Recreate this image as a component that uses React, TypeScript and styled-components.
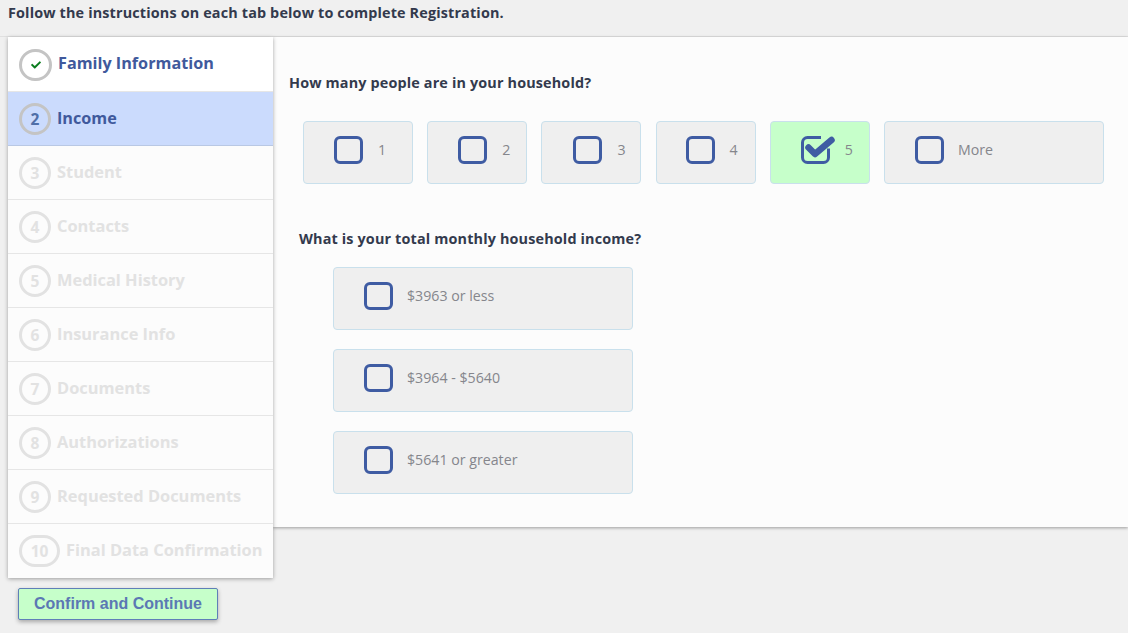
import styled, { createGlobalStyle } from 'styled-components';
import { FaCheck } from 'react-icons/fa';

type StepState = 'done' | 'active' | 'locked';

const GlobalStyle = createGlobalStyle`
  html, body {
    margin: 0;
    padding: 0;
    height: 633px;
    overflow: hidden;
    background: #f0f0f0;
    font-family: 'Open Sans', 'Liberation Sans', sans-serif;
  }
`;

const Page = styled.div`
  width: 1128px;
  height: 633px;
  overflow: hidden;
`;

const Intro = styled.div`
  height: 37px;
  padding: 5px 0 0 8px;
  box-sizing: border-box;
  font-size: 14.4px;
  letter-spacing: 0.15px;
  line-height: 16px;
  font-weight: 700;
  color: #333a4d;
  border-bottom: 1px solid #e0e0e0;
`;

const Layout = styled.div`
  display: flex;
  align-items: flex-start;
  padding-left: 8px;
`;

const SideColumn = styled.div`
  width: 265px;
  flex: none;
`;

const StepList = styled.div`
  position: relative;
  z-index: 1;
  box-shadow: 0 1px 4px rgba(0, 0, 0, 0.35);
  background: #fcfcfc;
`;

const Step = styled.div<{ $state: StepState }>`
  height: ${(p) => (p.$state === 'done' ? '55px' : '54px')};
  box-sizing: border-box;
  display: flex;
  align-items: center;
  gap: 6px;
  padding-left: 11px;
  border-bottom: 1px solid ${(p) => (p.$state === 'active' ? '#b9c8e4' : '#e6e6e6')};
  background: ${(p) => (p.$state === 'done' ? '#fff' : p.$state === 'active' ? '#cbdbfd' : '#fcfcfc')};
  color: ${(p) => (p.$state === 'locked' ? '#e2e2e2' : '#40599c')};
  &:last-child {
    border-bottom: 0;
    padding-bottom: 1px;
  }
`;

const StepBadge = styled.span<{ $state: StepState; $wide?: boolean }>`
  box-sizing: border-box;
  flex: none;
  height: 32px;
  min-width: ${(p) => (p.$state === 'done' ? '33px' : '32px')};
  width: ${(p) => (p.$wide ? '41px' : 'auto')};
  border-radius: 16px;
  border: 3px solid ${(p) => (p.$state === 'locked' ? '#e2e2e2' : '#c4c4c4')};
  display: flex;
  align-items: center;
  justify-content: center;
  font-size: 15.5px;
  font-weight: 700;
  color: ${(p) => (p.$state === 'locked' ? '#e2e2e2' : '#4f6fa8')};
  margin-top: ${(p) => (p.$state === 'done' ? '1px' : '0')};
`;

const StepLabel = styled.span<{ $state: StepState }>`
  font-size: ${(p) => (p.$state === 'locked' ? '16.4px' : '16.2px')};
  font-weight: 700;
  line-height: 20px;
  white-space: nowrap;
  margin-top: ${(p) => (p.$state === 'done' ? '-3px' : '-1px')};
`;

const ConfirmButton = styled.button`
  display: block;
  box-sizing: border-box;
  width: 200px;
  height: 32px;
  margin: 10px 0 0 10px;
  padding: 0;
  background: #c6ffca;
  border: 1px solid #5f7fb8;
  border-radius: 2px;
  box-shadow: 0 2px 4px rgba(0, 0, 0, 0.3);
  color: #5b78b4;
  font-family: 'Liberation Sans', Arial, sans-serif;
  font-size: 16px;
  font-weight: 700;
`;

const Panel = styled.div`
  flex: 1;
  height: 490px;
  box-sizing: border-box;
  background: #fcfcfc;
  box-shadow: 0 1px 3px rgba(0, 0, 0, 0.35);
  padding: 36px 0 0 16px;
`;

const Question = styled.div<{ $indent?: number; $top?: number }>`
  font-size: 14.4px;
  letter-spacing: 0.15px;
  line-height: 20px;
  font-weight: 700;
  color: #333a4d;
  margin: ${(p) => p.$top ?? 0}px 0 0 ${(p) => p.$indent ?? 0}px;
`;

const CountRow = styled.div`
  display: flex;
  gap: 14.2px;
  margin: 28px 0 0 14px;
`;

const Option = styled.div<{ $width: number; $checked?: boolean; $pad: number; $gap: number }>`
  box-sizing: border-box;
  flex: none;
  width: ${(p) => p.$width}px;
  height: 63px;
  display: flex;
  align-items: center;
  gap: ${(p) => p.$gap}px;
  padding: 0 0 6px ${(p) => p.$pad}px;
  background: ${(p) => (p.$checked ? '#c6ffca' : '#efefef')};
  border: 1px solid #c9e0ec;
  border-radius: 4px;
  color: #85868c;
  font-size: 14.2px;
`;

const IncomeList = styled.div`
  display: flex;
  flex-direction: column;
  gap: 19px;
  margin: 18px 0 0 44px;
`;

const CheckSquare = styled.span`
  box-sizing: border-box;
  flex: none;
  width: 29px;
  height: 28px;
  border: 3px solid #3f5ca3;
  border-radius: 6px;
`;

const CheckedSquare = styled.svg`
  flex: none;
  width: 29px;
  height: 28px;
  overflow: visible;
  color: #3f5ca3;
`;

const counts = [
  { label: '1', width: 110, pad: 30, gap: 15 },
  { label: '2', width: 100, pad: 30, gap: 15 },
  { label: '3', width: 100, pad: 31, gap: 15 },
  { label: '4', width: 100, pad: 29, gap: 15 },
  { label: '5', width: 100, pad: 30, gap: 15, checked: true },
  { label: 'More', width: 220, pad: 30, gap: 14 },
];

const steps = [
  'Family Information',
  'Income',
  'Student',
  'Contacts',
  'Medical History',
  'Insurance Info',
  'Documents',
  'Authorizations',
  'Requested Documents',
  'Final Data Confirmation',
];

const incomes = ['$3963 or less', '$3964 - $5640', '$5641 or greater'];

const stateOf = (i: number): StepState => (i === 0 ? 'done' : i === 1 ? 'active' : 'locked');

function CheckedIcon() {
  return (
    <CheckedSquare viewBox="0 0 29 28" aria-hidden="true">
      <path
        d="M20 1.5H6.5a5 5 0 0 0-5 5v15a5 5 0 0 0 5 5h16a5 5 0 0 0 5-5v-9"
        fill="none"
        stroke="currentColor"
        strokeWidth="3"
      />
      <path
        d="M7.5 11.5l6.5 6.5L30.5 4"
        fill="none"
        stroke="currentColor"
        strokeWidth="6.5"
        strokeLinecap="round"
        strokeLinejoin="round"
      />
    </CheckedSquare>
  );
}

export default function App() {
  return (
    <Page>
      <GlobalStyle />
      <Intro>Follow the instructions on each tab below to complete Registration.</Intro>
      <Layout>
        <SideColumn>
          <StepList>
            {steps.map((name, i) => (
              <Step key={name} $state={stateOf(i)}>
                <StepBadge $state={stateOf(i)} $wide={i === 9}>
                  {i === 0 ? <FaCheck size={10} color="#0a7d1e" /> : i + 1}
                </StepBadge>
                <StepLabel $state={stateOf(i)}>{name}</StepLabel>
              </Step>
            ))}
          </StepList>
          <ConfirmButton type="button">Confirm and Continue</ConfirmButton>
        </SideColumn>
        <Panel>
          <Question>How many people are in your household?</Question>
          <CountRow>
            {counts.map((c) => (
              <Option key={c.label} $width={c.width} $pad={c.pad} $gap={c.gap} $checked={c.checked}>
                {c.checked ? <CheckedIcon /> : <CheckSquare />}
                {c.label}
              </Option>
            ))}
          </CountRow>
          <Question $indent={10} $top={45}>
            What is your total monthly household income?
          </Question>
          <IncomeList>
            {incomes.map((label) => (
              <Option key={label} $width={300} $pad={30} $gap={14}>
                <CheckSquare />
                {label}
              </Option>
            ))}
          </IncomeList>
        </Panel>
      </Layout>
    </Page>
  );
}
